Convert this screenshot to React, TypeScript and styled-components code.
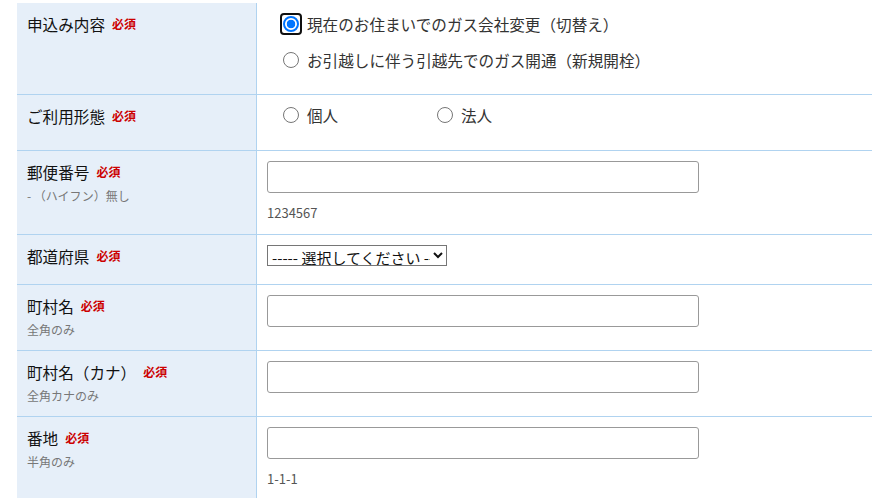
import React from 'react';
import styled, { createGlobalStyle } from 'styled-components';

const GlobalStyle = createGlobalStyle`
  body {
    margin: 0;
    background: #fff;
    font-family: "Noto Sans CJK JP", "Noto Sans", sans-serif;
    color: #111;
  }
`;

const Page = styled.div`
  padding: 3px 0 0 17px;
`;

const FormTable = styled.div`
  display: grid;
  grid-template-columns: 240px 1fr;
`;

const LabelCell = styled.div`
  background: #e6eff9;
  border-right: 1px solid #b0d3f0;
  border-bottom: 1px solid #b0d3f0;
  padding: 9px 10px;
`;

const LabelLine = styled.div`
  display: flex;
  align-items: center;
  font-size: 15.6px;
  line-height: 24px;
  color: #111;
`;

const Required = styled.span`
  margin-left: 7px;
  font-size: 12px;
  font-weight: 700;
  color: #cc0000;
`;

const Note = styled.div`
  margin-top: 3px;
  font-size: 12px;
  line-height: 18px;
  color: #777;
`;

const ValueCell = styled.div<{ $pad: string }>`
  border-bottom: 1px solid #b0d3f0;
  padding: ${(p) => p.$pad};
`;

const RadioList = styled.div<{ $row?: boolean }>`
  display: flex;
  flex-direction: ${(p) => (p.$row ? 'row' : 'column')};
  gap: 12px;
  padding-left: 16px;
`;

const RadioOption = styled.label<{ $width?: number }>`
  display: flex;
  align-items: center;
  gap: 8px;
  width: ${(p) => (p.$width ? `${p.$width}px` : 'auto')};
  font-size: 15.6px;
  line-height: 24px;
  color: #333;
`;

const RadioMark = styled.span<{ $checked?: boolean; $focused?: boolean }>`
  position: relative;
  flex: none;
  width: 16px;
  height: 16px;
  box-sizing: border-box;
  border-radius: 50%;
  border: ${(p) => (p.$checked ? '2px solid #0075ff' : '1px solid #767676')};
  background: ${(p) =>
    p.$checked ? 'radial-gradient(circle, #0075ff 0 4px, #fff 4.6px)' : '#fff'};

  &::after {
    content: '';
    display: ${(p) => (p.$focused ? 'block' : 'none')};
    position: absolute;
    inset: -5px;
    border: 2px solid #101010;
    border-radius: 4px;
  }
`;

const TextInput = styled.input`
  display: block;
  box-sizing: border-box;
  width: 432px;
  height: 32px;
  margin: 0 0 11px;
  border: 1px solid #999;
  border-radius: 3px;
  background: #fff;
`;

const Hint = styled.div`
  font-size: 13px;
  line-height: 18px;
  color: #555;
`;

const Select = styled.select`
  display: block;
  box-sizing: border-box;
  width: 180px;
  height: 21px;
  margin: 0 0 6px;
  padding: 0;
  font-family: "Noto Sans CJK JP", sans-serif;
  font-size: 15px;
  line-height: 1;
  color: #111;
  border: 1px solid #767676;
  border-radius: 0;
  background: #fff;
`;

type Field = {
  label: string;
  note?: string;
  hint?: string;
};

const textFields: Field[] = [
  { label: '町村名', note: '全角のみ' },
  { label: '町村名（カナ）', note: '全角カナのみ' },
  { label: '番地', note: '半角のみ', hint: '1-1-1' },
];

function Label({ label, note }: { label: string; note?: string }) {
  return (
    <LabelCell>
      <LabelLine>
        {label}
        <Required>必須</Required>
      </LabelLine>
      {note && <Note>{note}</Note>}
    </LabelCell>
  );
}

export default function App() {
  return (
    <Page>
      <GlobalStyle />
      <FormTable>
        <Label label="申込み内容" />
        <ValueCell $pad="9px 10px 22px">
          <RadioList>
            <RadioOption>
              <RadioMark $checked $focused />
              現在のお住まいでのガス会社変更（切替え）
            </RadioOption>
            <RadioOption>
              <RadioMark />
              お引越しに伴う引越先でのガス開通（新規開栓）
            </RadioOption>
          </RadioList>
        </ValueCell>

        <Label label="ご利用形態" />
        <ValueCell $pad="8px 10px 23px">
          <RadioList $row>
            <RadioOption $width={142}>
              <RadioMark />
              個人
            </RadioOption>
            <RadioOption>
              <RadioMark />
              法人
            </RadioOption>
          </RadioList>
        </ValueCell>

        <Label label="郵便番号" note="- （ハイフン）無し" />
        <ValueCell $pad="10px 10px 12px">
          <TextInput type="text" />
          <Hint>1234567</Hint>
        </ValueCell>

        <Label label="都道府県" />
        <ValueCell $pad="10px 10px 12px">
          <Select defaultValue="">
            <option value="">----- 選択してください -----</option>
          </Select>
        </ValueCell>

        {textFields.map((f) => (
          <React.Fragment key={f.label}>
            <Label label={f.label} note={f.note} />
            <ValueCell $pad="10px 10px 12px">
              <TextInput type="text" />
              {f.hint && <Hint>{f.hint}</Hint>}
            </ValueCell>
          </React.Fragment>
        ))}
      </FormTable>
    </Page>
  );
}
